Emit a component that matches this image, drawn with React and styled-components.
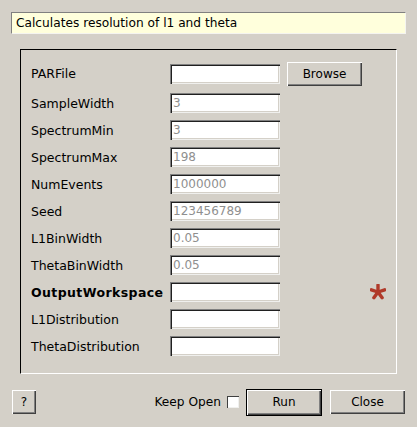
import React from "react";
import styled, { createGlobalStyle } from "styled-components";

const Global = createGlobalStyle`
  html, body { margin: 0; padding: 0; background: #d4d0c8; }
  * { box-sizing: border-box; }
`;

const Dialog = styled.div`
  width: 417px;
  height: 427px;
  background: #d4d0c8;
  font-family: "DejaVu Sans", Verdana, sans-serif;
  font-size: 12px;
  color: #000;
  padding: 12px 11px 0 11px;
  display: flex;
  flex-direction: column;
`;

const Description = styled.div`
  width: 395px;
  height: 22px;
  background: #ffffdc;
  border-top: 1px solid #808080;
  border-left: 1px solid #808080;
  border-bottom: 1px solid #f4f4f0;
  border-right: 1px solid #f4f4f0;
  padding: 0 4px;
  display: flex;
  align-items: center;
  font-size: 12.2px;
`;

const Group = styled.div`
  margin: 15px 0 0 9px;
  width: 377px;
  height: 325px;
  border-top: 1px solid #000;
  border-left: 1px solid #000;
  border-bottom: 1px solid #fff;
  border-right: 1px solid #fff;
  padding: 11px 0 0 10px;
  display: grid;
  grid-template-columns: 139px 110px 7px 75px 8px 16px;
  grid-template-rows: 25px;
  grid-auto-rows: 20px;
  row-gap: 7px;
  align-content: start;
  align-items: center;
`;

const Label = styled.div`
  grid-column: 1;
  font-size: 12.5px;
  font-weight: ${(p) => (p.$bold ? "bold" : "normal")};
  letter-spacing: ${(p) => (p.$bold ? "0.4px" : "0")};
  white-space: nowrap;
`;

const Field = styled.div`
  grid-column: 2;
  height: 20px;
  background: #fff;
  box-shadow: inset 1px 1px #808080, inset 2px 2px #202020,
    inset -1px -1px #f0f0ee, inset -2px -2px #d4d0c8;
  padding: 0 3px;
  display: flex;
  align-items: center;
  color: #8f8f8f;
`;

const Button = styled.button`
  font-family: inherit;
  font-size: 12px;
  color: #000;
  background: #d4d0c8;
  border: none;
  width: ${(p) => p.$w}px;
  height: 24px;
  padding: 0;
  box-shadow: inset 1px 1px #fff, inset -1px -1px #404040,
    inset -2px -2px #808080;
`;

const DefaultButton = styled(Button)`
  height: 27px;
  box-shadow: inset 0 0 0 1px #000, inset 2px 2px #fff,
    inset -2px -2px #404040, inset -3px -3px #808080;
`;

const BrowseCell = styled.div`
  grid-column: 4;
  display: flex;
`;

const MarkCell = styled.div`
  grid-column: 6;
  display: flex;
  justify-content: center;
  align-items: center;
`;

const Footer = styled.div`
  margin-top: 16px;
  padding: 0 1px;
  display: flex;
  align-items: center;
  height: 24px;
`;

const Spacer = styled.div`
  flex: 1;
`;

const KeepOpen = styled.label`
  display: flex;
  align-items: center;
  gap: 6px;
  margin-right: 7px;
  font-size: 12.2px;
`;

const Check = styled.span`
  width: 12px;
  height: 12px;
  background: #fff;
  box-shadow: inset 1px 1px #404040, inset -1px -1px #f0f0ee;
`;

const Gap = styled.div`
  width: 8px;
`;

const Asterisk = () => (
  <svg width="16" height="16" viewBox="-8 -8 16 16">
    {[-90, -18, 54, 126, 198].map((a) => {
      const r = (a * Math.PI) / 180;
      return (
        <line
          key={a}
          x1="0"
          y1="0"
          x2={7 * Math.cos(r)}
          y2={7 * Math.sin(r)}
          stroke="#b03a2a"
          strokeWidth="3.4"
          strokeLinecap="round"
        />
      );
    })}
  </svg>
);

const rows = [
  { name: "PARFile", value: "", browse: true },
  { name: "SampleWidth", value: "3" },
  { name: "SpectrumMin", value: "3" },
  { name: "SpectrumMax", value: "198" },
  { name: "NumEvents", value: "1000000" },
  { name: "Seed", value: "123456789" },
  { name: "L1BinWidth", value: "0.05" },
  { name: "ThetaBinWidth", value: "0.05" },
  { name: "OutputWorkspace", value: "", bold: true, required: true },
  { name: "L1Distribution", value: "" },
  { name: "ThetaDistribution", value: "" },
];

export default function App() {
  return (
    <Dialog>
      <Global />
      <Description>Calculates resolution of l1 and theta</Description>
      <Group>
        {rows.map((r) => (
          <React.Fragment key={r.name}>
            <Label $bold={r.bold}>{r.name}</Label>
            <Field>{r.value}</Field>
            {r.browse && (
              <BrowseCell>
                <Button $w={75}>Browse</Button>
              </BrowseCell>
            )}
            {r.required && (
              <MarkCell>
                <Asterisk />
              </MarkCell>
            )}
          </React.Fragment>
        ))}
      </Group>
      <Footer>
        <Button $w={24}>?</Button>
        <Spacer />
        <KeepOpen>
          Keep Open <Check />
        </KeepOpen>
        <DefaultButton $w={76}>Run</DefaultButton>
        <Gap />
        <Button $w={75}>Close</Button>
      </Footer>
    </Dialog>
  );
}
